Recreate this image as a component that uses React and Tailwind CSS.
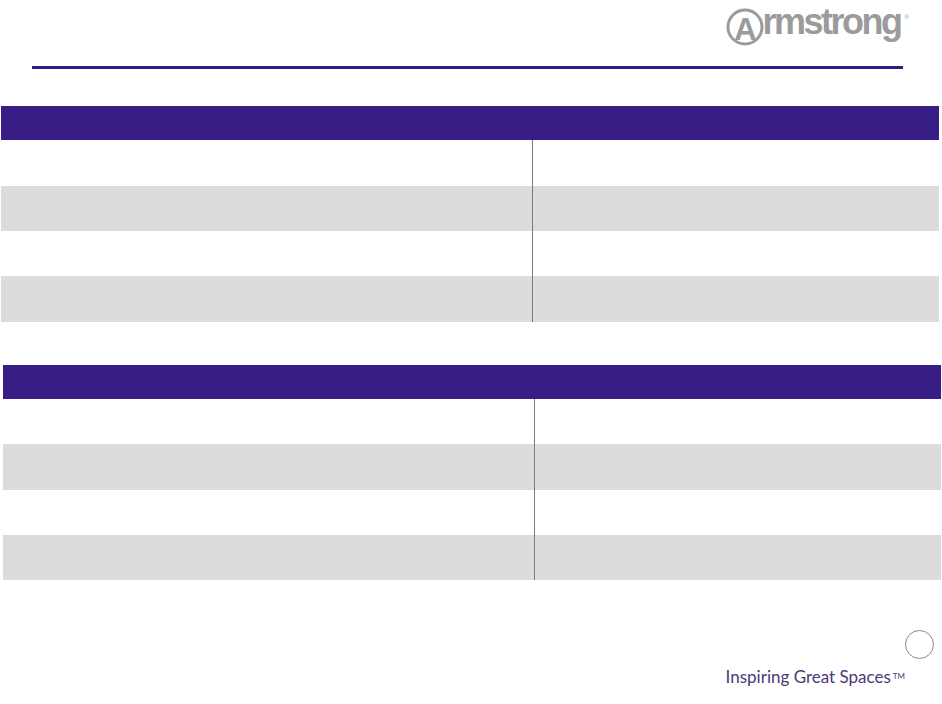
import React from "react";

const purple = "bg-[#381d86]";

const Logo = () => {
  return (
    <div className="flex items-start">
      <svg width="38" height="38" viewBox="0 0 38 38" overflow="visible" className="shrink-0 mt-[8px]">
        <circle cx="19" cy="19" r="17" fill="none" stroke="#9b9b9b" strokeWidth="3" />
        <text
          x="19.5"
          y="32"
          textAnchor="middle"
          fontFamily="Liberation Sans, Arial, sans-serif"
          fontWeight="700"
          fontSize="31"
          fill="#9b9b9b"
        >
          A
        </text>
      </svg>
      <span
        className="-ml-[1px] mt-[4px] text-[36px] leading-none font-bold tracking-[-2.5px] text-[#9b9b9b]"
        style={{ fontFamily: '"Liberation Sans", Arial, sans-serif' }}
      >
        rmstrong
      </span>
      <span className="mt-[14px] ml-[4px] text-[6px] leading-none text-[#9b9b9b]">®</span>
    </div>
  );
};

const Row = ({ gray, h }) => {
  return (
    <div className={`flex ${h} ${gray ? "bg-[#dcdcdc]" : "bg-white"}`}>
      <div className="w-[532px] border-r border-[#7c7c7c]" />
      <div className="flex-1" />
    </div>
  );
};

const App = () => {
  return (
    <div
      className="w-[942px] h-[704px] bg-white overflow-hidden flex flex-col"
      style={{ fontFamily: '"Liberation Sans", Arial, sans-serif' }}
    >
      {/* top logo + rule */}
      <div className="h-[66px] flex justify-end items-start pr-[33px]">
        <Logo />
      </div>
      <div className="ml-[32px] w-[871px] h-[3px] bg-[#2f1f7c]" />

      {/* first table */}
      <div className="mt-[37px] ml-[1px] w-[938px] flex flex-col">
        <div className={`h-[34px] ${purple}`} />
        <Row h="h-[46px]" />
        <Row h="h-[45px]" gray />
        <Row h="h-[45px]" />
        <Row h="h-[46px]" gray />
      </div>

      {/* second table */}
      <div className="mt-[43px] ml-[3px] w-[938px] flex flex-col">
        <div className={`h-[34px] ${purple}`} />
        <Row h="h-[45px]" />
        <Row h="h-[46px]" gray />
        <Row h="h-[45px]" />
        <Row h="h-[45px]" gray />
      </div>

      {/* footer */}
      <div className="flex flex-col items-end">
        <div className="mt-[50px] mr-[8px] w-[29px] h-[29px] rounded-full border border-[#8a8a8a]" />
        <div className="mt-[9px] mr-[37px] flex items-start text-[#4b3a78]">
          <span className="text-[17px] leading-none" style={{ fontFamily: 'Lato, "Open Sans", sans-serif' }}>
            Inspiring Great Spaces
          </span>
          <span className="text-[8px] leading-none ml-[2px] mt-[4px]" style={{ fontFamily: "Lato, sans-serif" }}>
            TM
          </span>
        </div>
      </div>
    </div>
  );
};

export default App;
